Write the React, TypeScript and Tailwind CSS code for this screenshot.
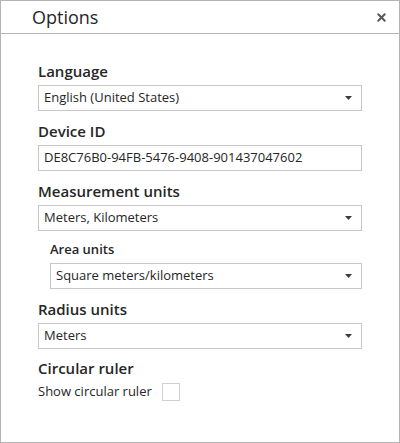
import { X } from "lucide-react";

const font = { fontFamily: '"Open Sans", "Noto Sans", sans-serif' };

function Caret() {
  return (
    <svg width="7" height="4" viewBox="0 0 7 4" className="shrink-0">
      <path d="M0 0h7L3.5 4z" fill="#3c3c3c" />
    </svg>
  );
}

function Select({ value }: { value: string }) {
  return (
    <div className="flex h-[26px] items-center justify-between border border-[#c8c8c8] bg-white pl-[5px] pr-[9px] text-[13px] text-[#262626]">
      <span>{value}</span>
      <Caret />
    </div>
  );
}

function Label({ children }: { children: React.ReactNode }) {
  return <div className="h-[25px] text-[15px] font-semibold leading-[22px] text-[#262626]">{children}</div>;
}

export default function App() {
  return (
    <div className="h-[443px] w-[400px] border border-[#b4b4b4] bg-white" style={font}>
      <div className="flex h-[33px] items-center justify-between border-b border-[#b4b4b4] pl-[31px] pr-[11px]">
        <span className="text-[18px] text-[#262626]">Options</span>
        <X className="h-[13px] w-[13px] text-[#555]" strokeWidth={3.5} />
      </div>
      <div className="px-[37px] pt-[26px]">
        <Label>Language</Label>
        <Select value="English (United States)" />
        <div className="mt-[9px]">
          <Label>Device ID</Label>
          <div className="flex h-[26px] items-center border border-[#c8c8c8] pl-[5px] text-[13px] text-[#262626]">
            DE8C76B0-94FB-5476-9408-901437047602
          </div>
        </div>
        <div className="mt-[9px]">
          <Label>Measurement units</Label>
          <Select value="Meters, Kilometers" />
        </div>
        <div className="mt-[8px] pl-[12px]">
          <div className="h-[24px] text-[13px] font-semibold leading-[20px] text-[#262626]">Area units</div>
          <Select value="Square meters/kilometers" />
        </div>
        <div className="mt-[9px]">
          <Label>Radius units</Label>
          <Select value="Meters" />
        </div>
        <div className="mt-[8px]">
          <Label>Circular ruler</Label>
          <div className="flex items-center gap-[10px] text-[13px] text-[#262626]">
            <span>Show circular ruler</span>
            <div className="h-[18px] w-[18px] border border-[#d0d0d0] bg-white" />
          </div>
        </div>
      </div>
    </div>
  );
}
